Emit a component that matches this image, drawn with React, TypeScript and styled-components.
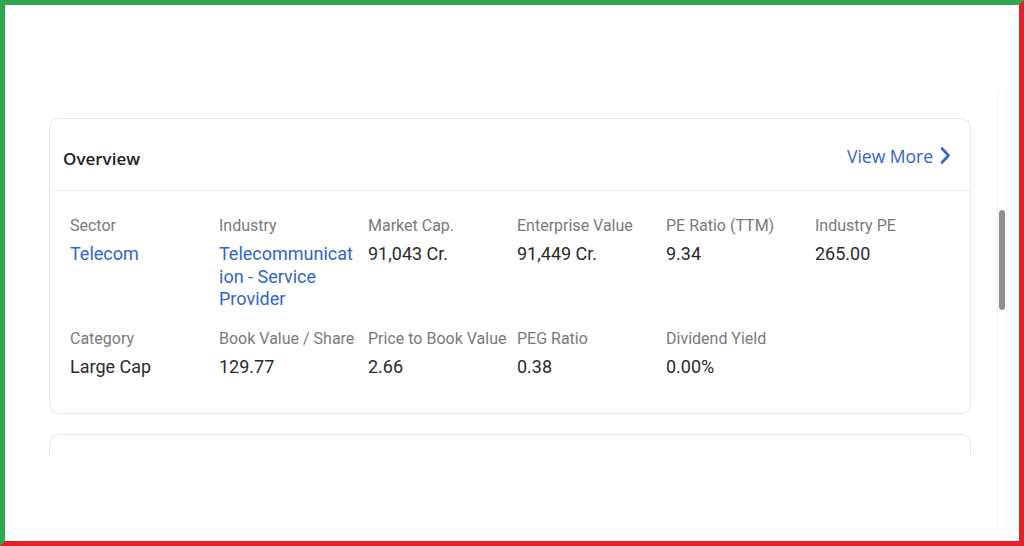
import styled, { createGlobalStyle } from 'styled-components';

const GlobalStyle = createGlobalStyle`
  html, body {
    margin: 0;
    padding: 0;
    background: #ffffff;
  }
  * {
    box-sizing: border-box;
  }
`;

interface Stat {
  label: string;
  value: string;
  link?: boolean;
}

const stats: Stat[] = [
  { label: 'Sector', value: 'Telecom', link: true },
  { label: 'Industry', value: 'Telecommunication - Service Provider', link: true },
  { label: 'Market Cap.', value: '91,043 Cr.' },
  { label: 'Enterprise Value', value: '91,449 Cr.' },
  { label: 'PE Ratio (TTM)', value: '9.34' },
  { label: 'Industry PE', value: '265.00' },
  { label: 'Category', value: 'Large Cap' },
  { label: 'Book Value / Share', value: '129.77' },
  { label: 'Price to Book Value', value: '2.66' },
  { label: 'PEG Ratio', value: '0.38' },
  { label: 'Dividend Yield', value: '0.00%' },
];

const ChevronRight = () => (
  <svg width="12" height="17" viewBox="0 0 12 17" fill="none">
    <path d="M3 1.5 L9.5 8.5 L3 15.5" stroke="#2f65cf" strokeWidth="2.6" strokeLinecap="round" strokeLinejoin="round" />
  </svg>
);

const App = () => {
  return (
    <>
      <GlobalStyle />
      <Frame>
        <Viewport>
          <Card>
            <CardHeader>
              <Title>Overview</Title>
              <ViewMore href="#">
                View More
                <ChevronRight />
              </ViewMore>
            </CardHeader>
            <StatsGrid>
              {stats.map((stat) => (
                <StatCell key={stat.label}>
                  <StatLabel>{stat.label}</StatLabel>
                  <StatValue link={!!stat.link}>{stat.value}</StatValue>
                </StatCell>
              ))}
            </StatsGrid>
          </Card>
          <NextCard />
        </Viewport>
        <ScrollTrack>
          <ScrollThumb />
        </ScrollTrack>
      </Frame>
    </>
  );
};

const Frame = styled.div`
  width: 1024px;
  height: 546px;
  display: flex;
  align-items: flex-start;
  padding-top: 85px;
  background: #ffffff;
  border-top: 5px solid #2ea84f;
  border-left: 5px solid #2ea84f;
  border-right: 5px solid #e4212b;
  border-bottom: 5px solid #e4212b;
  overflow: hidden;
`;

const Viewport = styled.div`
  width: 992px;
  height: 365px;
  overflow: hidden;
  padding: 28px 26px 0 44px;
  display: flex;
  flex-direction: column;
  gap: 20px;
  flex-shrink: 0;
`;

const Card = styled.div`
  width: 922px;
  background: #ffffff;
  border: 1px solid #e7e7e7;
  border-radius: 10px;
  flex-shrink: 0;
`;

const NextCard = styled(Card)`
  height: 80px;
`;

const CardHeader = styled.div`
  height: 72px;
  padding: 6px 19px 0 13px;
  display: flex;
  align-items: center;
  justify-content: space-between;
  border-bottom: 1px solid #ececec;
`;

const Title = styled.div`
  font-family: 'Open Sans', 'Liberation Sans', sans-serif;
  font-size: 17px;
  font-weight: 600;
  color: #1f1f1f;
  margin-top: 2px;
`;

const ViewMore = styled.a`
  display: flex;
  align-items: center;
  gap: 6px;
  font-family: 'Open Sans', 'Liberation Sans', sans-serif;
  font-size: 17.5px;
  color: #2f65cf;
  text-decoration: none;
  margin-top: -4px;
`;

const StatsGrid = styled.div`
  display: grid;
  grid-template-columns: repeat(6, 149px);
  row-gap: 18px;
  padding: 25px 0 35px 20px;
`;

const StatCell = styled.div`
  display: flex;
  flex-direction: column;
  gap: 7px;
`;

const StatLabel = styled.div`
  font-family: Roboto, 'Liberation Sans', sans-serif;
  font-size: 16px;
  line-height: 20px;
  color: #7a7a7a;
  white-space: nowrap;
`;

const StatValue = styled.div<{ link: boolean }>`
  max-width: 136px;
  font-family: Roboto, 'Liberation Sans', sans-serif;
  font-size: 18px;
  line-height: 22.5px;
  color: ${({ link }) => (link ? '#2f65cf' : '#2b2b2b')};
  overflow-wrap: anywhere;
`;

const ScrollTrack = styled.div`
  width: 10px;
  height: 440px;
  flex-shrink: 0;
  display: flex;
  justify-content: center;
  border-left: 1px solid #f3f3f3;
  border-right: 1px solid #f3f3f3;
`;

const ScrollThumb = styled.div`
  width: 6px;
  height: 100px;
  margin-top: 120px;
  border-radius: 3px;
  background: #8f8f8f;
`;

export default App;
